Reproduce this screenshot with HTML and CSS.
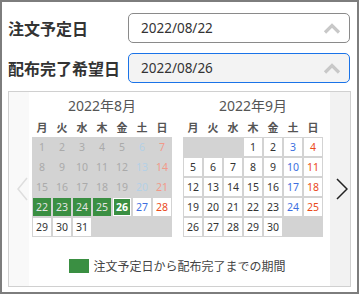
FILE: index.html
```html
<!DOCTYPE html>
<html lang="ja">
<head>
<meta charset="UTF-8">
<title>配布期間</title>
<link rel="stylesheet" href="styles.css">
</head>
<body>
<div class="frame">
  <div class="field">
    <label class="field-label">注文予定日</label>
    <div class="date-input">
      <span>2022/08/22</span>
      <svg class="chev" width="18" height="11" viewBox="0 0 18 11"><polyline points="2,9.5 9,2.5 16,9.5"/></svg>
    </div>
  </div>
  <div class="field">
    <label class="field-label">配布完了希望日</label>
    <div class="date-input focus">
      <span>2022/08/26</span>
      <svg class="chev" width="18" height="11" viewBox="0 0 18 11"><polyline points="2,9.5 9,2.5 16,9.5"/></svg>
    </div>
  </div>

  <div class="picker">
    <div class="nav prev">
      <svg width="11" height="24" viewBox="0 0 11 24"><polyline points="10,1 1,12 10,23"/></svg>
    </div>
    <div class="picker-body">
      <div class="months">
        <div class="month">
          <div class="month-title">2022年8月</div>
          <div class="week"><span>月</span><span>火</span><span>水</span><span>木</span><span>金</span><span>土</span><span>日</span></div>
          <div class="days">
            <span class="off">1</span><span class="off">2</span><span class="off">3</span><span class="off">4</span><span class="off">5</span><span class="off sat">6</span><span class="off sun">7</span>
            <span class="off">8</span><span class="off">9</span><span class="off">10</span><span class="off">11</span><span class="off">12</span><span class="off sat">13</span><span class="off sun">14</span>
            <span class="off">15</span><span class="off">16</span><span class="off">17</span><span class="off">18</span><span class="off">19</span><span class="off sat">20</span><span class="off sun">21</span>
            <span class="day range">22</span><span class="day range">23</span><span class="day range">24</span><span class="day range">25</span><span class="day range end">26</span><span class="day sat">27</span><span class="day sun">28</span>
            <span class="day">29</span><span class="day">30</span><span class="day">31</span>
          </div>
        </div>
        <div class="month">
          <div class="month-title">2022年9月</div>
          <div class="week"><span>月</span><span>火</span><span>水</span><span>木</span><span>金</span><span>土</span><span>日</span></div>
          <div class="days">
            <span class="blank"></span><span class="blank"></span><span class="blank"></span><span class="day">1</span><span class="day">2</span><span class="day sat">3</span><span class="day sun">4</span>
            <span class="day">5</span><span class="day">6</span><span class="day">7</span><span class="day">8</span><span class="day">9</span><span class="day sat">10</span><span class="day sun">11</span>
            <span class="day">12</span><span class="day">13</span><span class="day">14</span><span class="day">15</span><span class="day">16</span><span class="day sat">17</span><span class="day sun">18</span>
            <span class="day">19</span><span class="day">20</span><span class="day">21</span><span class="day">22</span><span class="day">23</span><span class="day sat">24</span><span class="day sun">25</span>
            <span class="day">26</span><span class="day">27</span><span class="day">28</span><span class="day">29</span><span class="day">30</span>
          </div>
        </div>
      </div>
      <div class="legend">
        <span class="swatch"></span>
        <span>注文予定日から配布完了までの期間</span>
      </div>
    </div>
    <div class="nav next">
      <svg width="12" height="22" viewBox="0 0 12 22"><polyline points="1,1 11,11 1,21"/></svg>
    </div>
  </div>
</div>
</body>
</html>
```

FILE: styles.css
```css
:root{
  --green:#3a8f42;
  --grid:#d3d3d3;
  --jp:"Noto Sans","Noto Sans CJK JP",sans-serif;
}
*{box-sizing:border-box;margin:0;padding:0}
body{
  font-family:var(--jp);
  color:#333;
  background:#fff;
}

/* 外枠 */
.frame{
  width:359px;height:294px;
  border:2px solid #7d7d7d;
  padding:11px 6px 0 6px;
}

/* 入力行 */
.field{
  display:flex;align-items:center;
  height:30px;margin-bottom:10px;
}
.field-label{
  width:120px;
  font-size:16px;font-weight:700;
  color:#333;
}
.date-input{
  width:222px;height:30px;
  display:flex;align-items:center;justify-content:space-between;
  padding:0 8px 0 12px;
  border:1px solid #8a8a8a;border-radius:5px;
  font-size:13.5px;color:#333;
}
.date-input.focus{
  border-color:#1a73e8;
  background:#f3f3f3;
}
.chev polyline{fill:none;stroke:#c8c8c8;stroke-width:3.2}

/* カレンダー */
.picker{
  display:flex;
  height:196px;
  margin-top:-2px;
  border:1px solid #d0d0d0;
}
.nav{
  width:20px;
  display:flex;align-items:center;
}
.nav polyline{fill:none;stroke-width:1.5}
.prev{background:#f9f9f9;justify-content:flex-end;padding-right:1px}
.prev polyline{stroke:#dedede}
.next{background:#f2f2f2;padding-left:6px}
.next polyline{stroke:#222}

.picker-body{
  flex:1;
  padding:4px 7px 0 3px;
}
.months{display:flex;gap:11px}
.month{width:140px}
.month-title{
  height:20px;line-height:20px;
  text-align:center;
  font-size:14px;color:#555;
}
.week{
  display:grid;grid-template-columns:repeat(7,20px);
  height:21px;align-items:center;
  font-size:11px;font-weight:700;color:#555;
  text-align:center;
}
.days{
  display:grid;
  grid-template-columns:repeat(7,20px);
  grid-template-rows:repeat(5,20px);
  background:var(--grid);
  font-size:10.5px;
}
.days span{
  display:flex;align-items:center;justify-content:center;
}
.off{color:#aaa}
.off.sat{color:#b4d0e6}
.off.sun{color:#f19a8a}
.day{
  background:#fff;
  border:1px solid var(--grid);
  color:#333;
}
.day.sat{color:#3d6fe0}
.day.sun{color:#ea4a1a}
.day.range{background:var(--green);color:#e4e4e4}
.day.end{
  color:#fff;font-weight:700;
  box-shadow:inset 0 0 0 1px #fff;
}

.legend{
  display:flex;align-items:center;justify-content:center;
  gap:4px;
  margin-top:20px;
  font-size:12px;color:#444;
}
.swatch{
  width:20px;height:14px;
  background:var(--green);
}
```
